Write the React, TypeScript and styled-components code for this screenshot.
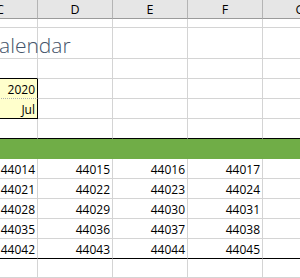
import React from "react";
import styled, { createGlobalStyle } from "styled-components";

const Global = createGlobalStyle`
  html, body { margin: 0; padding: 0; background: #ffffff; overflow: hidden; }
`;

const Viewport = styled.div`
  width: 300px;
  height: 278px;
  overflow: hidden;
  background: #ffffff;
  font-family: "Open Sans", "Liberation Sans", sans-serif;
`;

const Sheet = styled.div`
  margin-left: -37px;
  width: 375px;
  display: flex;
  flex-direction: column;
`;

const Row = styled.div<{ $h: number }>`
  display: grid;
  grid-template-columns: repeat(5, 75px);
  height: ${(p) => p.$h}px;
`;

const HeaderCell = styled.div`
  box-sizing: border-box;
  background: #e6e6e6;
  border-right: 1px solid #b4b4b4;
  border-bottom: 1px solid #9b9b9b;
  display: flex;
  align-items: center;
  justify-content: center;
  font-size: 12.5px;
  color: #000000;
`;

const Cell = styled.div<{
  $fill?: string;
  $right?: string;
  $bottom?: string;
  $bottomStyle?: string;
}>`
  box-sizing: border-box;
  min-width: 0;
  background: ${(p) => p.$fill ?? "transparent"};
  border-right: 1px solid ${(p) => p.$right ?? "#d4d4d4"};
  border-bottom: 1px ${(p) => p.$bottomStyle ?? "solid"} ${(p) => p.$bottom ?? "#d4d4d4"};
  display: flex;
  align-items: flex-end;
  justify-content: flex-end;
  padding: 0 2px 1px 0;
  font-size: 12px;
  line-height: 14px;
  color: #000000;
  white-space: nowrap;
`;

const TitleCell = styled(Cell)`
  justify-content: flex-start;
  padding: 0 0 1px 23px;
  font-size: 21px;
  line-height: 24px;
  font-weight: 300;
  color: #44546a;
  overflow: visible;
`;

const BandCell = styled.div`
  background: #70ad47;
  border-bottom: 1px solid #70ad47;
  box-sizing: border-box;
`;

const cols = ["C", "D", "E", "F", "G"];
const start = 44014;
const weeks = [0, 1, 2, 3, 4];

export default function App() {
  const blank = (h: number, key: string, lastBottom?: string) => (
    <Row $h={h} key={key}>
      {cols.map((c) => (
        <Cell key={c} $bottom={lastBottom} />
      ))}
    </Row>
  );

  return (
    <Viewport>
      <Global />
      <Sheet>
        <Row $h={19}>
          {cols.map((c) => (
            <HeaderCell key={c}>{c}</HeaderCell>
          ))}
        </Row>
        {blank(9, "r1")}
        <Row $h={31}>
          <TitleCell>Calendar</TitleCell>
          {cols.slice(1).map((c) => (
            <Cell key={c} />
          ))}
        </Row>
        <Row $h={20}>
          <Cell $bottom="#000000" />
          {cols.slice(1).map((c) => (
            <Cell key={c} />
          ))}
        </Row>
        <Row $h={20}>
          <Cell $fill="#ffffcc" $right="#000000" $bottom="#b0b0b0" $bottomStyle="dotted">
            2020
          </Cell>
          {cols.slice(1).map((c) => (
            <Cell key={c} />
          ))}
        </Row>
        <Row $h={20}>
          <Cell $fill="#ffffcc" $right="#000000" $bottom="#000000">
            Jul
          </Cell>
          {cols.slice(1).map((c) => (
            <Cell key={c} />
          ))}
        </Row>
        {blank(20, "r6", "#000000")}
        <Row $h={20}>
          {cols.map((c) => (
            <BandCell key={c} />
          ))}
        </Row>
        {weeks.map((w) => (
          <Row $h={20} key={w}>
            {cols.map((c, i) => (
              <Cell key={c} $bottom={w === weeks.length - 1 ? "#000000" : undefined}>
                {start + w * 7 + i}
              </Cell>
            ))}
          </Row>
        ))}
        {blank(19, "last")}
      </Sheet>
    </Viewport>
  );
}
